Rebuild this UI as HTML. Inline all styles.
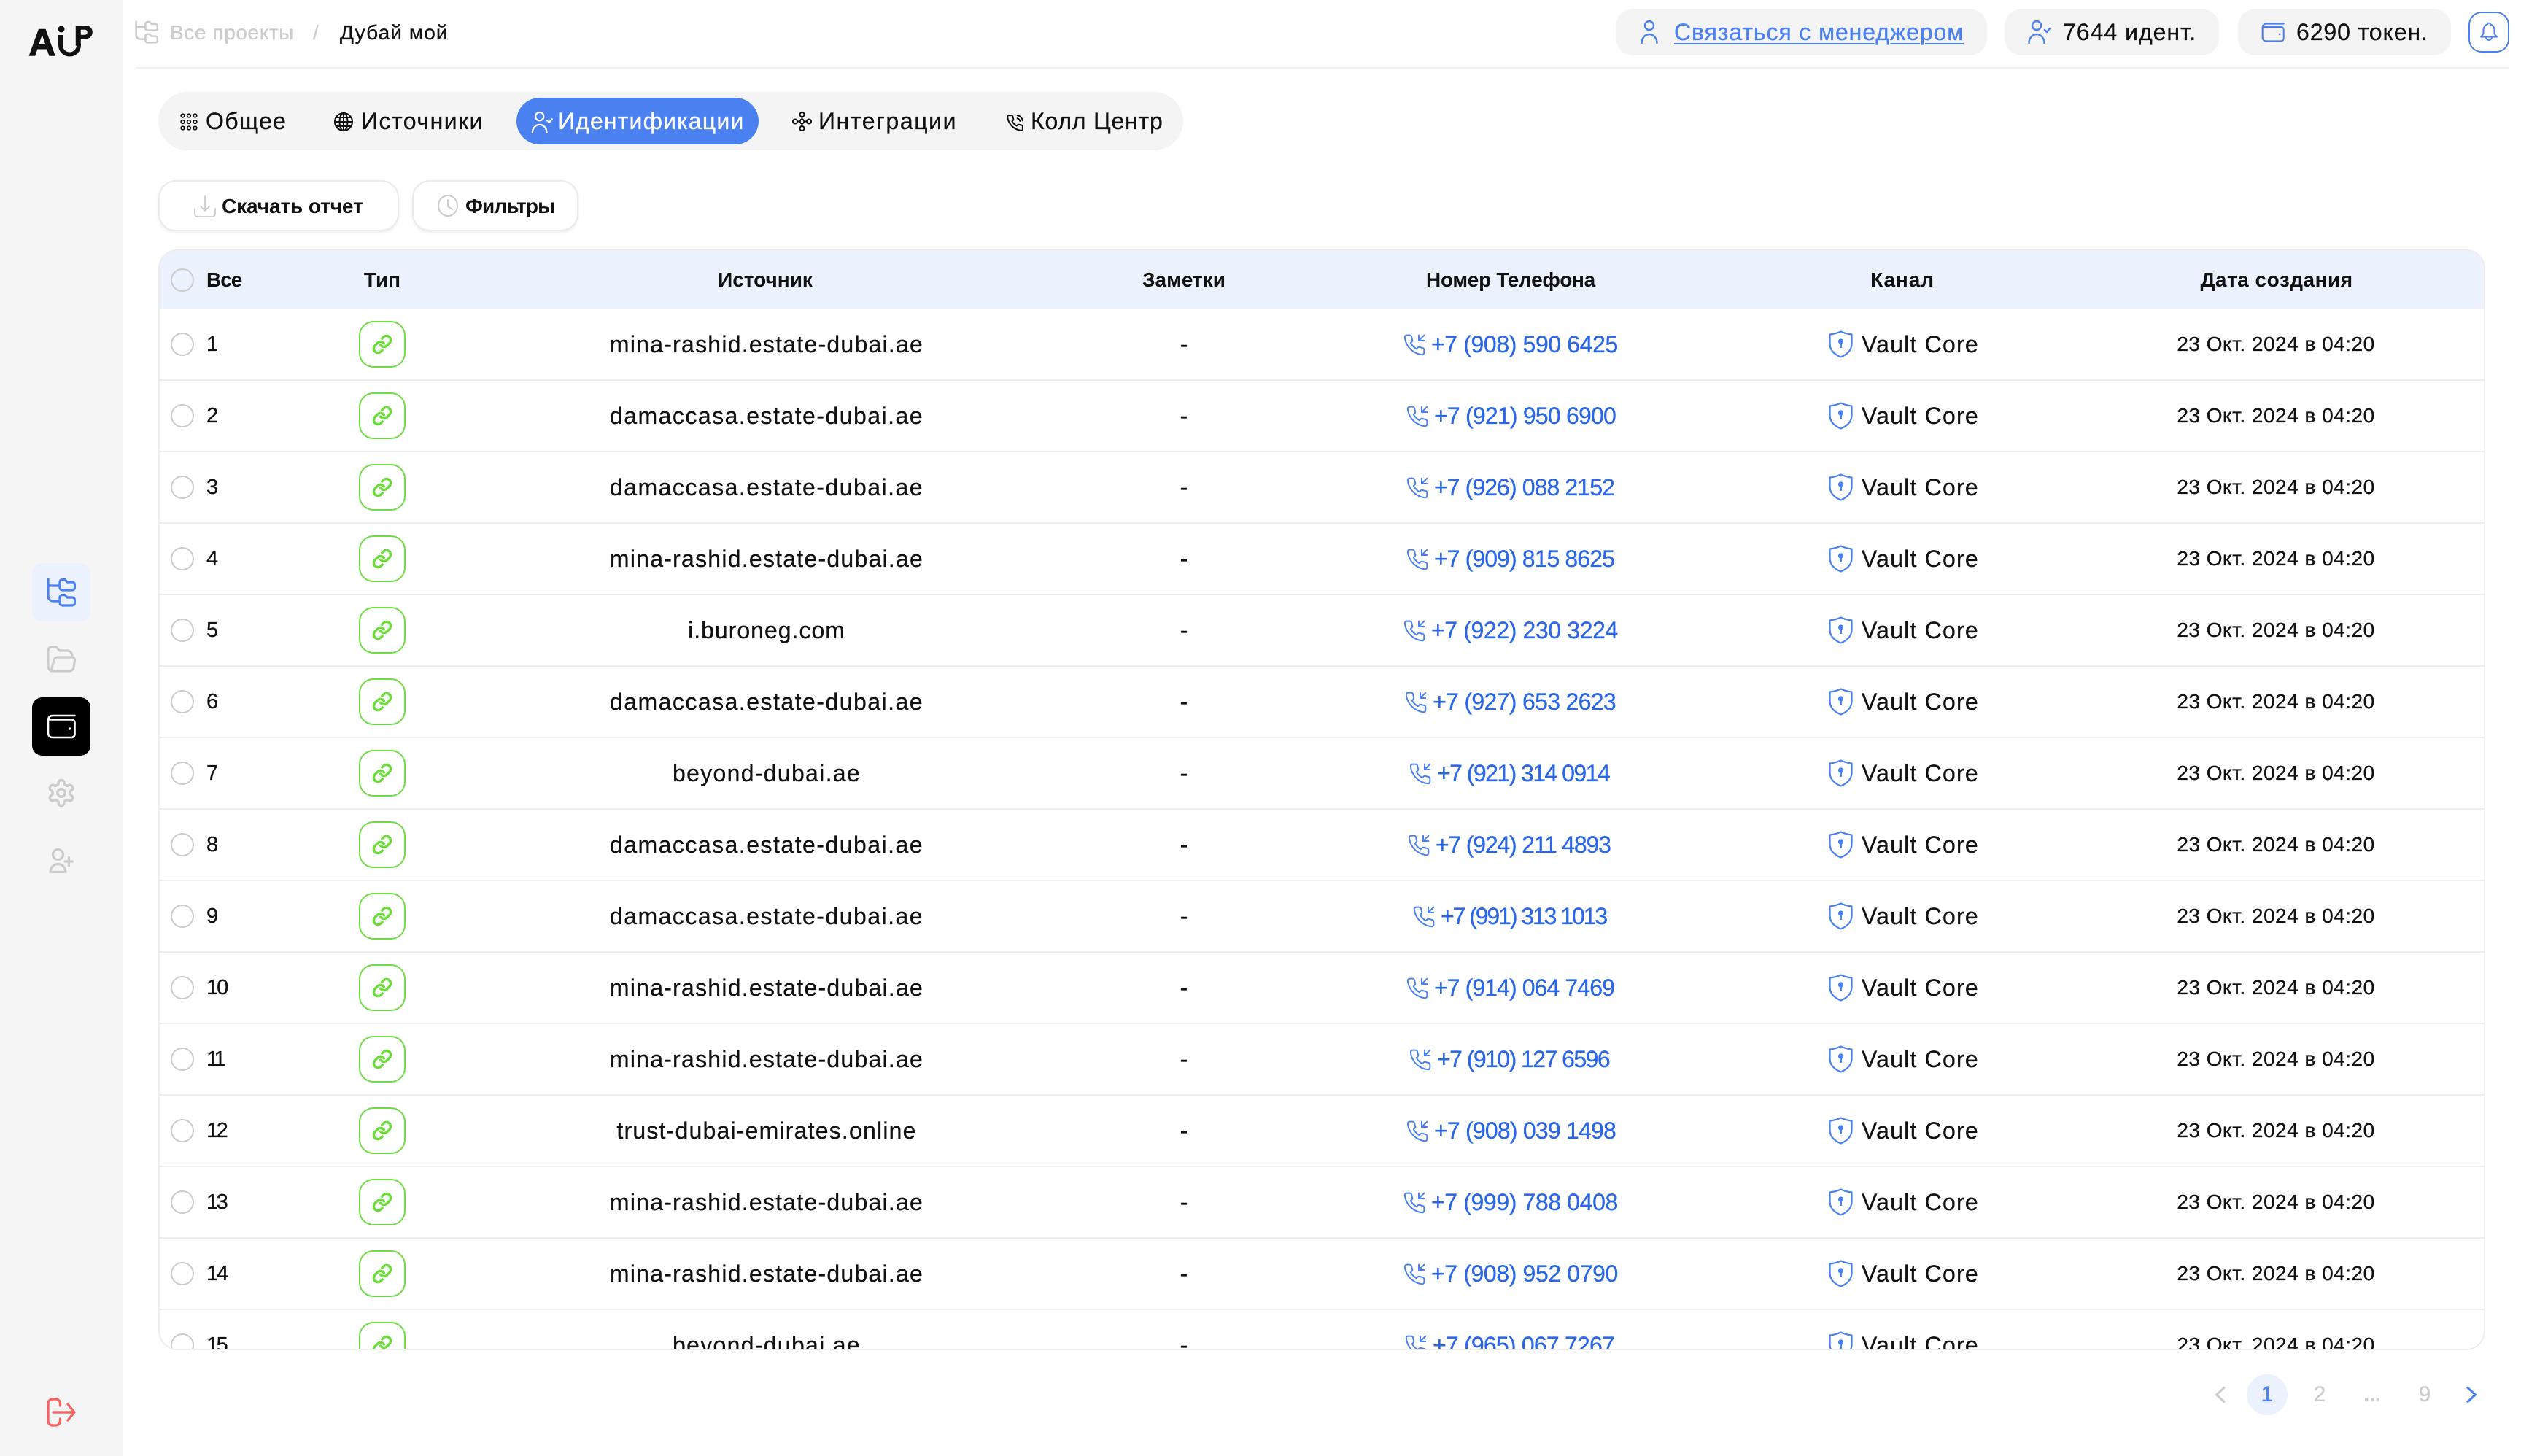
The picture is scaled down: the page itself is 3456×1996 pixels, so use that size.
<!DOCTYPE html>
<html lang="ru">
<head>
<meta charset="utf-8">
<title>Дубай мой</title>
<style>
*{box-sizing:border-box;margin:0;padding:0}
html,body{width:3456px;height:1996px;overflow:hidden;background:#fff}
body{position:relative;font-family:"Liberation Sans","Noto Sans CJK SC",sans-serif;color:#111;font-size:32px;-webkit-text-stroke:.3px}
.abs,.t{position:absolute;white-space:nowrap}
svg{position:absolute;overflow:visible}
.side{position:absolute;left:0;top:0;width:168px;height:1996px;background:#f5f5f5}
.nb{position:absolute;left:44px;width:80px;height:80px;border-radius:14px}
.pill{position:absolute;top:12px;height:64px;background:#f4f4f4;border-radius:24px}
.btn{position:absolute;top:247px;height:70px;background:#fff;border:2px solid #ebebeb;border-radius:24px;box-shadow:0 2px 4px rgba(0,0,0,.07)}
.tbl{position:absolute;left:217px;top:342px;width:3190px;height:1509px;overflow:hidden;border-radius:26px}
.hd{position:absolute;left:0;top:0;width:3190px;height:82px;background:#ebf1fd}
.h{position:absolute;top:0;height:84px;line-height:84px;font-size:28px;font-weight:bold;white-space:nowrap;text-align:center;width:600px;-webkit-text-stroke:0}
.ra{position:absolute;left:17px;top:32px;width:32px;height:32px;border:2px solid #ccc;border-radius:50%;background:transparent}
.r{position:absolute;left:0;width:3190px;height:98px;border-bottom:2px solid #eee;line-height:96px}
.r span{position:absolute;top:0;height:96px;white-space:nowrap}
.n{left:66px;font-size:29px;letter-spacing:-1.5px}
.ty{position:absolute;left:275px;top:16px;width:64px;height:64px;border:2px solid #71dc45;border-radius:20px;color:#6bdc3a}
.ty svg{left:16px;top:16px;width:28px;height:28px}
.s{left:534px;width:600px;text-align:center}
.m{left:1106px;width:600px;text-align:center}
.p{color:#2a66e8}
.p svg{left:0;top:33px;width:32px;height:32px;color:#4a80f0}
.p em{font-style:normal;position:absolute;left:39px;top:0;white-space:nowrap}
.ch{left:2335px;width:400px;letter-spacing:1.2px}
.ch svg{left:-45px;top:29px;width:33px;height:38px;color:#4a80f0}
.d{left:2603px;width:600px;text-align:center;font-size:28px;letter-spacing:.5px}
.bd{position:absolute;left:217px;top:342px;width:3190px;height:1509px;border:2px solid #eee;border-radius:26px;pointer-events:none}
.pg{position:absolute;top:1884px;height:56px;line-height:56px;width:56px;text-align:center;font-size:30px;color:#ccc}
</style>
</head>
<body>
<svg width="0" height="0" style="position:absolute">
<defs>
<symbol id="tree" viewBox="0 0 40 40"><g fill="none" stroke="currentColor" stroke-width="3.2" stroke-linecap="round" stroke-linejoin="round"><path d="M2 2V25a7 7 0 0 0 7 7H18M2 11H18"/><path d="M18 6a3.500 3.500 0 0 1 3.500-3.500h3.500l3 3.500h7a3.500 3.500 0 0 1 3.500 3.500v4a3.500 3.500 0 0 1-3.500 3.500h-13.500a3.500 3.500 0 0 1-3.500-3.500z"/><path d="M18 27a3.500 3.500 0 0 1 3.500-3.500h3.500l3 3.500h7a3.500 3.500 0 0 1 3.500 3.500v4a3.500 3.500 0 0 1-3.500 3.500h-13.500a3.500 3.500 0 0 1-3.500-3.500z"/></g></symbol>
<symbol id="ofolder" viewBox="0 0 40 37"><g fill="none" stroke="currentColor" stroke-width="3.2" stroke-linecap="round" stroke-linejoin="round"><path d="M2 29V7a5 5 0 0 1 5-5h6l5 5h10a7 7 0 0 1 7 7v2"/><path d="M6 35l4-15a5 5 0 0 1 5-4h20a3.500 3.500 0 0 1 3.500 4L37 30a6 6 0 0 1-6 5H8a6 6 0 0 1-6-6"/></g></symbol>
<symbol id="wallet" viewBox="0 0 40 34"><g fill="none" stroke="currentColor" stroke-width="2.600" stroke-linecap="round" stroke-linejoin="round"><path d="M38.500 2H8A6 6 0 0 0 2 8v18a6 6 0 0 0 6 6h26a4.500 4.500 0 0 0 4.500-4.500V12A4.500 4.500 0 0 0 34 7.500H3.500"/></g><circle cx="31.500" cy="20" r="1.700" fill="currentColor"/></symbol>
<symbol id="gear" viewBox="0 0 24 24"><g fill="none" stroke="currentColor" stroke-width="2" stroke-linecap="round" stroke-linejoin="round"><path d="M12.220 2h-.44a2 2 0 0 0-2 2v.18a2 2 0 0 1-1 1.730l-.43.25a2 2 0 0 1-2 0l-.15-.08a2 2 0 0 0-2.730.73l-.22.38a2 2 0 0 0 .73 2.730l.15.1a2 2 0 0 1 1 1.720v.51a2 2 0 0 1-1 1.740l-.15.09a2 2 0 0 0-.73 2.730l.22.38a2 2 0 0 0 2.730.73l.15-.08a2 2 0 0 1 2 0l.43.25a2 2 0 0 1 1 1.730V20a2 2 0 0 0 2 2h.44a2 2 0 0 0 2-2v-.18a2 2 0 0 1 1-1.730l.43-.25a2 2 0 0 1 2 0l.15.08a2 2 0 0 0 2.730-.73l.22-.39a2 2 0 0 0-.73-2.730l-.15-.08a2 2 0 0 1-1-1.740v-.5a2 2 0 0 1 1-1.740l.15-.09a2 2 0 0 0 .73-2.730l-.22-.38a2 2 0 0 0-2.730-.73l-.15.08a2 2 0 0 1-2 0l-.43-.25a2 2 0 0 1-1-1.730V4a2 2 0 0 0-2-2z"/><circle cx="12" cy="12" r="3"/></g></symbol>
<symbol id="uplus" viewBox="0 0 34 34"><g fill="none" stroke="currentColor" stroke-width="3.200" stroke-linecap="round" stroke-linejoin="round"><circle cx="12.500" cy="8.500" r="7"/><path d="M2 32.500a10.500 11 0 0 1 21 0z"/><path d="M22 18h10.500M27.500 12.500v11"/></g></symbol>
<symbol id="exit" viewBox="0 0 40 40"><g fill="none" stroke="currentColor" stroke-width="3.200" stroke-linecap="round" stroke-linejoin="round"><path d="M18.500 11V8a6 6 0 0 0-6-6H8a6 6 0 0 0-6 6v24a6 6 0 0 0 6 6h4.500a6 6 0 0 0 6-6v-3"/><path d="M9 20H38M29 9l9 11-9 11"/></g></symbol>
<symbol id="person" viewBox="0 0 24 32"><g fill="none" stroke="currentColor" stroke-width="2.400" stroke-linecap="round"><circle cx="12" cy="7" r="6"/><path d="M1.500 31a10.500 12 0 0 1 21 0"/></g></symbol>
<symbol id="pcheck" viewBox="0 0 31 32"><g fill="none" stroke="currentColor" stroke-width="2.400" stroke-linecap="round" stroke-linejoin="round"><circle cx="12" cy="7" r="6"/><path d="M1.500 31a10.500 12 0 0 1 21 0"/><path d="M23 13l3 3 4-5"/></g></symbol>
<symbol id="bell" viewBox="0 0 24 28"><g fill="none" stroke="currentColor" stroke-width="2" stroke-linecap="round" stroke-linejoin="round"><path d="M12 1.500c1.200 0 1.800.9 2 2 3.500 1 5.500 4 5.500 8v4c0 1.500 1.500 3 3.500 5H1c2-2 3.500-3.500 3.500-5v-4c0-4 2-7 5.500-8 .2-1.100.8-2 2-2z"/><path d="M8 21a4 4 0 0 0 8 0"/></g></symbol>
<symbol id="grid" viewBox="0 0 24 24"><g fill="none" stroke="currentColor" stroke-width="1.700"><circle cx="3.500" cy="3.500" r="2.300"/><circle cx="12" cy="3.500" r="2.300"/><circle cx="20.500" cy="3.500" r="2.300"/><circle cx="3.500" cy="12" r="2.300"/><circle cx="12" cy="12" r="2.300"/><circle cx="20.500" cy="12" r="2.300"/><circle cx="3.500" cy="20.500" r="2.300"/><circle cx="12" cy="20.500" r="2.300"/><circle cx="20.500" cy="20.500" r="2.300"/></g></symbol>
<symbol id="globe" viewBox="0 0 26 26"><g fill="none" stroke="currentColor" stroke-width="2"><circle cx="13" cy="13" r="12"/><ellipse cx="13" cy="13" rx="5.500" ry="12"/><path d="M13 1v24M1 13h24M3 7h20M3 19h20"/></g></symbol>
<symbol id="integ" viewBox="0 0 27 27"><g fill="none" stroke="currentColor" stroke-width="2.100"><circle cx="13.500" cy="4" r="3"/><circle cx="13.500" cy="23" r="3"/><circle cx="4" cy="13.500" r="3"/><circle cx="23" cy="13.500" r="3"/><circle cx="13.500" cy="13.500" r="2.800"/><path d="M13.500 7v3.700M13.500 16.300V20M7 13.500h3.700M16.300 13.500H20"/></g></symbol>
<symbol id="call" viewBox="0 0 24 24"><g fill="none" stroke="currentColor" stroke-width="1.900" stroke-linecap="round" stroke-linejoin="round"><path d="M15 6a5 5 0 0 1 3.500 3.500M15 2a9 9 0 0 1 7 7M22 16.920v3a2 2 0 0 1-2.180 2 19.790 19.790 0 0 1-8.630-3.070 19.500 19.500 0 0 1-6-6 19.790 19.790 0 0 1-3.070-8.670A2 2 0 0 1 4.110 2h3a2 2 0 0 1 2 1.720 12.840 12.840 0 0 0 .7 2.810 2 2 0 0 1-.45 2.110L8.090 9.910a16 16 0 0 0 6 6l1.270-1.270a2 2 0 0 1 2.110-.45 12.840 12.840 0 0 0 2.810.7A2 2 0 0 1 22 16.920z"/></g></symbol>
<symbol id="pin" viewBox="0 0 24 24"><g fill="none" stroke="currentColor" stroke-width="1.500" stroke-linecap="round" stroke-linejoin="round"><path d="M16.500 2v5.500H22M22 2l-5.500 5.500M22 16.920v3a2 2 0 0 1-2.180 2 19.790 19.790 0 0 1-8.630-3.070 19.500 19.500 0 0 1-6-6 19.790 19.790 0 0 1-3.070-8.670A2 2 0 0 1 4.110 2h3a2 2 0 0 1 2 1.720 12.840 12.840 0 0 0 .7 2.810 2 2 0 0 1-.45 2.110L8.090 9.910a16 16 0 0 0 6 6l1.270-1.270a2 2 0 0 1 2.110-.45 12.840 12.840 0 0 0 2.810.7A2 2 0 0 1 22 16.920z"/></g></symbol>
<symbol id="link" viewBox="0 0 24 24"><g fill="none" stroke="currentColor" stroke-width="2.900" stroke-linecap="round" stroke-linejoin="round"><path d="M10 13a5 5 0 0 0 7.540.54l3-3a5 5 0 0 0-7.070-7.070l-1.720 1.710"/><path d="M14 11a5 5 0 0 0-7.540-.54l-3 3a5 5 0 0 0 7.070 7.070l1.710-1.710"/></g></symbol>
<symbol id="shield" viewBox="0 0 33 38"><path d="M16.500 1.500C21 3.500 26 5 31.500 5.500V18C31.500 27 25 33 16.500 36.500 8 33 1.500 27 1.500 18V5.500C7 5 12 3.500 16.500 1.500Z" fill="none" stroke="currentColor" stroke-width="2.200" stroke-linejoin="round"/><circle cx="16.500" cy="15" r="3.600" fill="currentColor"/><rect x="15" y="16" width="3" height="8" rx="1" fill="currentColor"/></symbol>
<symbol id="down" viewBox="0 0 30 30"><g fill="none" stroke="currentColor" stroke-width="1.800" stroke-linecap="round" stroke-linejoin="round"><path d="M15 1v20M9 15l6 6 6-6"/><path d="M1 18v7a4 4 0 0 0 4 4h20a4 4 0 0 0 4-4v-7"/></g></symbol>
<symbol id="clock" viewBox="0 0 28 30"><g fill="none" stroke="currentColor" stroke-width="2" stroke-linecap="round" stroke-linejoin="round"><ellipse cx="14" cy="15" rx="13" ry="14"/><path d="M14 7v9l6 4"/></g></symbol>
</defs>
</svg>

<div class="side"></div>
<svg style="left:36px;top:30px" width="100" height="50" viewBox="0 0 100 50">
<text x="3" y="46" font-family="Liberation Sans" font-weight="bold" font-size="52" fill="#111" stroke="#111" stroke-width="1">A</text>
<circle cx="48" cy="10" r="4.500" fill="#111"/>
<path d="M47 18v14a12.500 12.500 0 0 0 25 0V30" fill="none" stroke="#111" stroke-width="6"/>
<text x="66" y="32" font-family="Liberation Sans" font-weight="bold" font-size="38" fill="#111" stroke="#111" stroke-width="1.500">P</text>
</svg>
<div class="nb" style="top:772px;background:#ebf1fd"></div>
<svg style="left:64px;top:792px;color:#4a80f0" width="40" height="40"><use href="#tree"/></svg>
<svg style="left:64px;top:885px;color:#ccc" width="40" height="37"><use href="#ofolder"/></svg>
<div class="nb" style="top:956px;background:#000"></div>
<svg style="left:64px;top:979px;color:#fff" width="40" height="34"><use href="#wallet"/></svg>
<svg style="left:63px;top:1065px;color:#ccc" width="42" height="44"><use href="#gear"/></svg>
<svg style="left:67px;top:1163px;color:#ccc" width="34" height="34"><use href="#uplus"/></svg>
<svg style="left:64px;top:1916px;color:#f85f5f" width="40" height="40"><use href="#exit"/></svg>

<svg style="left:185px;top:28px;color:#ccc" width="32" height="32"><use href="#tree"/></svg>
<div class="t" style="left:233px;top:25px;line-height:40px;font-size:28px;letter-spacing:.6px;color:#ccc">Все проекты</div>
<div class="t" style="left:429px;top:25px;line-height:40px;font-size:28px;color:#ccc">/</div>
<div class="t" style="left:466px;top:25px;line-height:40px;font-size:28px;letter-spacing:1.1px">Дубай мой</div>
<div class="abs" style="left:185px;top:92px;width:3255px;height:2px;background:#f0f0f0"></div>

<div class="pill" style="left:2215px;width:509px"></div>
<svg style="left:2249px;top:28px;color:#4a80f0" width="24" height="32"><use href="#person"/></svg>
<div class="t" style="left:2295px;top:22px;line-height:44px;letter-spacing:.9px;color:#4a80f0;text-decoration:underline;text-underline-offset:4px;text-decoration-thickness:2px">Связаться с менеджером</div>
<div class="pill" style="left:2748px;width:294px"></div>
<svg style="left:2780px;top:28px;color:#4a80f0" width="31" height="32"><use href="#pcheck"/></svg>
<div class="t" style="left:2828px;top:22px;line-height:44px;letter-spacing:1px">7644 идент.</div>
<div class="pill" style="left:3068px;width:292px"></div>
<svg style="left:3100px;top:31px;color:#4a80f0" width="32" height="27"><use href="#wallet"/></svg>
<div class="t" style="left:3148px;top:22px;line-height:44px;letter-spacing:.9px">6290 токен.</div>
<div class="abs" style="left:3384px;top:16px;width:56px;height:56px;border:2px solid #4a80f0;border-radius:18px"></div>
<svg style="left:3400px;top:30px;color:#4a80f0" width="24" height="28"><use href="#bell"/></svg>

<div class="abs" style="left:217px;top:126px;width:1405px;height:80px;background:#f4f4f4;border-radius:40px"></div>
<div class="abs" style="left:708px;top:134px;width:332px;height:64px;background:#4a80f0;border-radius:32px"></div>
<svg style="left:247px;top:155px;color:#111" width="24" height="24"><use href="#grid"/></svg>
<div class="t" style="left:282px;top:144px;line-height:44px;letter-spacing:1.3px">Общее</div>
<svg style="left:458px;top:154px;color:#111" width="26" height="26"><use href="#globe"/></svg>
<div class="t" style="left:495px;top:144px;line-height:44px;letter-spacing:1.5px">Источники</div>
<svg style="left:728px;top:153px;color:#fff" width="30" height="30"><use href="#pcheck"/></svg>
<div class="t" style="left:765px;top:144px;line-height:44px;letter-spacing:1.15px;color:#fff">Идентификации</div>
<svg style="left:1086px;top:153px;color:#111" width="27" height="27"><use href="#integ"/></svg>
<div class="t" style="left:1122px;top:144px;line-height:44px;letter-spacing:1.6px">Интеграции</div>
<svg style="left:1379px;top:156px;color:#111" width="25" height="25"><use href="#call"/></svg>
<div class="t" style="left:1413px;top:144px;line-height:44px;letter-spacing:.8px">Колл Центр</div>

<div class="btn" style="left:217px;width:330px"></div>
<svg style="left:266px;top:268px;color:#ccc" width="30" height="30"><use href="#down"/></svg>
<div class="t" style="left:304px;top:262px;line-height:42px;font-size:28px;font-weight:bold;letter-spacing:-.1px;-webkit-text-stroke:0">Скачать отчет</div>
<div class="btn" style="left:565px;width:228px"></div>
<svg style="left:600px;top:267px;color:#ccc" width="28" height="30"><use href="#clock"/></svg>
<div class="t" style="left:638px;top:262px;line-height:42px;font-size:28px;font-weight:bold;letter-spacing:-.9px;-webkit-text-stroke:0">Фильтры</div>

<div class="tbl">
<div class="hd"></div>
<i class="ra" style="top:26px"></i>
<div class="t" style="left:66px;top:0;line-height:84px;font-size:28px;font-weight:bold;letter-spacing:-1px;-webkit-text-stroke:0">Все</div>
<div class="h" style="left:7px">Тип</div>
<div class="h" style="left:532px">Источник</div>
<div class="h" style="left:1106px">Заметки</div>
<div class="h" style="left:1554px;letter-spacing:-.3px">Номер Телефона</div>
<div class="h" style="left:2091px;letter-spacing:.9px">Канал</div>
<div class="h" style="left:2604px;letter-spacing:.5px">Дата создания</div>

<div class="r" style="top:82px"><i class="ra"></i><span class="n">1</span><b class="ty"><svg><use href="#link"/></svg></b><span class="s" style="letter-spacing:1.24px">mina-rashid.estate-dubai.ae</span><span class="m">-</span><span class="p" style="left:1706px"><svg><use href="#pin"/></svg><em style="letter-spacing:-.38px">+7 (908) 590 6425</em></span><span class="ch"><svg><use href="#shield"/></svg>Vault Core</span><span class="d">23 Окт. 2024 в 04:20</span></div>
<div class="r" style="top:180px"><i class="ra"></i><span class="n">2</span><b class="ty"><svg><use href="#link"/></svg></b><span class="s" style="letter-spacing:1.48px">damaccasa.estate-dubai.ae</span><span class="m">-</span><span class="p" style="left:1710px"><svg><use href="#pin"/></svg><em style="letter-spacing:-.79px">+7 (921) 950 6900</em></span><span class="ch"><svg><use href="#shield"/></svg>Vault Core</span><span class="d">23 Окт. 2024 в 04:20</span></div>
<div class="r" style="top:278px"><i class="ra"></i><span class="n">3</span><b class="ty"><svg><use href="#link"/></svg></b><span class="s" style="letter-spacing:1.48px">damaccasa.estate-dubai.ae</span><span class="m">-</span><span class="p" style="left:1710px"><svg><use href="#pin"/></svg><em style="letter-spacing:-.91px">+7 (926) 088 2152</em></span><span class="ch"><svg><use href="#shield"/></svg>Vault Core</span><span class="d">23 Окт. 2024 в 04:20</span></div>
<div class="r" style="top:376px"><i class="ra"></i><span class="n">4</span><b class="ty"><svg><use href="#link"/></svg></b><span class="s" style="letter-spacing:1.24px">mina-rashid.estate-dubai.ae</span><span class="m">-</span><span class="p" style="left:1710px"><svg><use href="#pin"/></svg><em style="letter-spacing:-.91px">+7 (909) 815 8625</em></span><span class="ch"><svg><use href="#shield"/></svg>Vault Core</span><span class="d">23 Окт. 2024 в 04:20</span></div>
<div class="r" style="top:474px"><i class="ra"></i><span class="n">5</span><b class="ty"><svg><use href="#link"/></svg></b><span class="s" style="letter-spacing:1px">i.buroneg.com</span><span class="m">-</span><span class="p" style="left:1706px"><svg><use href="#pin"/></svg><em style="letter-spacing:-.38px">+7 (922) 230 3224</em></span><span class="ch"><svg><use href="#shield"/></svg>Vault Core</span><span class="d">23 Окт. 2024 в 04:20</span></div>
<div class="r" style="top:572px"><i class="ra"></i><span class="n">6</span><b class="ty"><svg><use href="#link"/></svg></b><span class="s" style="letter-spacing:1.48px">damaccasa.estate-dubai.ae</span><span class="m">-</span><span class="p" style="left:1708px"><svg><use href="#pin"/></svg><em style="letter-spacing:-.67px">+7 (927) 653 2623</em></span><span class="ch"><svg><use href="#shield"/></svg>Vault Core</span><span class="d">23 Окт. 2024 в 04:20</span></div>
<div class="r" style="top:670px"><i class="ra"></i><span class="n">7</span><b class="ty"><svg><use href="#link"/></svg></b><span class="s" style="letter-spacing:1.3px">beyond-dubai.ae</span><span class="m">-</span><span class="p" style="left:1714px"><svg><use href="#pin"/></svg><em style="letter-spacing:-1.55px">+7 (921) 314 0914</em></span><span class="ch"><svg><use href="#shield"/></svg>Vault Core</span><span class="d">23 Окт. 2024 в 04:20</span></div>
<div class="r" style="top:768px"><i class="ra"></i><span class="n">8</span><b class="ty"><svg><use href="#link"/></svg></b><span class="s" style="letter-spacing:1.48px">damaccasa.estate-dubai.ae</span><span class="m">-</span><span class="p" style="left:1712px"><svg><use href="#pin"/></svg><em style="letter-spacing:-1.2px">+7 (924) 211 4893</em></span><span class="ch"><svg><use href="#shield"/></svg>Vault Core</span><span class="d">23 Окт. 2024 в 04:20</span></div>
<div class="r" style="top:866px"><i class="ra"></i><span class="n">9</span><b class="ty"><svg><use href="#link"/></svg></b><span class="s" style="letter-spacing:1.48px">damaccasa.estate-dubai.ae</span><span class="m">-</span><span class="p" style="left:1719px"><svg><use href="#pin"/></svg><em style="letter-spacing:-2.08px">+7 (991) 313 1013</em></span><span class="ch"><svg><use href="#shield"/></svg>Vault Core</span><span class="d">23 Окт. 2024 в 04:20</span></div>
<div class="r" style="top:964px"><i class="ra"></i><span class="n" style="letter-spacing:-2px">10</span><b class="ty"><svg><use href="#link"/></svg></b><span class="s" style="letter-spacing:1.24px">mina-rashid.estate-dubai.ae</span><span class="m">-</span><span class="p" style="left:1710px"><svg><use href="#pin"/></svg><em style="letter-spacing:-.91px">+7 (914) 064 7469</em></span><span class="ch"><svg><use href="#shield"/></svg>Vault Core</span><span class="d">23 Окт. 2024 в 04:20</span></div>
<div class="r" style="top:1062px"><i class="ra"></i><span class="n" style="letter-spacing:-3.500px">11</span><b class="ty"><svg><use href="#link"/></svg></b><span class="s" style="letter-spacing:1.24px">mina-rashid.estate-dubai.ae</span><span class="m">-</span><span class="p" style="left:1714px"><svg><use href="#pin"/></svg><em style="letter-spacing:-1.55px">+7 (910) 127 6596</em></span><span class="ch"><svg><use href="#shield"/></svg>Vault Core</span><span class="d">23 Окт. 2024 в 04:20</span></div>
<div class="r" style="top:1160px"><i class="ra"></i><span class="n" style="letter-spacing:-2.500px">12</span><b class="ty"><svg><use href="#link"/></svg></b><span class="s" style="letter-spacing:1.2px">trust-dubai-emirates.online</span><span class="m">-</span><span class="p" style="left:1710px"><svg><use href="#pin"/></svg><em style="letter-spacing:-.79px">+7 (908) 039 1498</em></span><span class="ch"><svg><use href="#shield"/></svg>Vault Core</span><span class="d">23 Окт. 2024 в 04:20</span></div>
<div class="r" style="top:1258px"><i class="ra"></i><span class="n" style="letter-spacing:-2.500px">13</span><b class="ty"><svg><use href="#link"/></svg></b><span class="s" style="letter-spacing:1.24px">mina-rashid.estate-dubai.ae</span><span class="m">-</span><span class="p" style="left:1706px"><svg><use href="#pin"/></svg><em style="letter-spacing:-.38px">+7 (999) 788 0408</em></span><span class="ch"><svg><use href="#shield"/></svg>Vault Core</span><span class="d">23 Окт. 2024 в 04:20</span></div>
<div class="r" style="top:1356px"><i class="ra"></i><span class="n" style="letter-spacing:-2px">14</span><b class="ty"><svg><use href="#link"/></svg></b><span class="s" style="letter-spacing:1.24px">mina-rashid.estate-dubai.ae</span><span class="m">-</span><span class="p" style="left:1706px"><svg><use href="#pin"/></svg><em style="letter-spacing:-.38px">+7 (908) 952 0790</em></span><span class="ch"><svg><use href="#shield"/></svg>Vault Core</span><span class="d">23 Окт. 2024 в 04:20</span></div>
<div class="r" style="top:1454px"><i class="ra"></i><span class="n" style="letter-spacing:-2.500px">15</span><b class="ty"><svg><use href="#link"/></svg></b><span class="s" style="letter-spacing:1.3px">beyond-dubai.ae</span><span class="m">-</span><span class="p" style="left:1708px"><svg><use href="#pin"/></svg><em style="letter-spacing:-.79px">+7 (965) 067 7267</em></span><span class="ch"><svg><use href="#shield"/></svg>Vault Core</span><span class="d">23 Окт. 2024 в 04:20</span></div>
</div>
<div class="bd"></div>

<svg style="left:3036px;top:1900px" width="16" height="24" viewBox="0 0 16 24"><path d="M14 1.500 2.500 12 14 22.500" fill="none" stroke="#ccc" stroke-width="3"/></svg>
<div class="abs" style="left:3080px;top:1884px;width:56px;height:56px;border-radius:50%;background:#ebf1fd"></div>
<div class="pg" style="left:3080px;color:#4a80f0">1</div>
<div class="pg" style="left:3152px">2</div>
<div class="pg" style="left:3224px;font-weight:bold;font-size:28px">...</div>
<div class="pg" style="left:3296px">9</div>
<svg style="left:3380px;top:1900px" width="16" height="24" viewBox="0 0 16 24"><path d="M2 1.500 13.500 12 2 22.500" fill="none" stroke="#4a80f0" stroke-width="3"/></svg>
</body>
</html>
